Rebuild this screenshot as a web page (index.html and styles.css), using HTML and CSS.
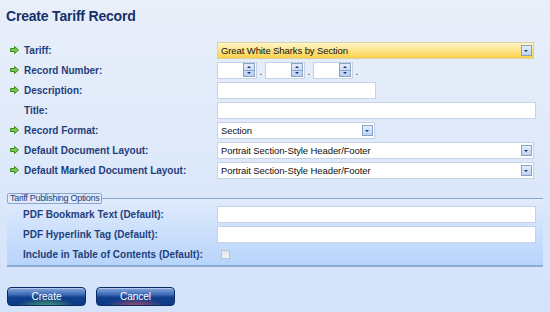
FILE: index.html
```html
<!DOCTYPE html>
<html lang="en">
<head>
  <meta charset="UTF-8">
  <title>Create Tariff Record</title>
  <link rel="stylesheet" href="styles.css">
</head>
<body>
  <h1 class="page-title">Create Tariff Record</h1>

  <div class="form-rows">
    <div class="row">
      <label class="req">
        <svg class="arrow" width="9" height="8" viewBox="0 0 9 8"><path d="M0.5 2.5h4v-2l4 3.5-4 3.5v-2h-4z" fill="#7cc84a" stroke="#3d8a22" stroke-width="1"/></svg>
        Tariff:
      </label>
      <div class="select select-wide select-hl">
        <span>Great White Sharks by Section</span>
        <span class="drop-btn"></span>
      </div>
    </div>

    <div class="row">
      <label class="req">
        <svg class="arrow" width="9" height="8" viewBox="0 0 9 8"><path d="M0.5 2.5h4v-2l4 3.5-4 3.5v-2h-4z" fill="#7cc84a" stroke="#3d8a22" stroke-width="1"/></svg>
        Record Number:
      </label>
      <div class="spinners">
        <div class="spin"><span class="spin-btn"><i class="up"></i><i class="down"></i></span></div>
        <span class="dot">.</span>
        <div class="spin"><span class="spin-btn"><i class="up"></i><i class="down"></i></span></div>
        <span class="dot">.</span>
        <div class="spin"><span class="spin-btn"><i class="up"></i><i class="down"></i></span></div>
        <span class="dot">.</span>
      </div>
    </div>

    <div class="row">
      <label class="req">
        <svg class="arrow" width="9" height="8" viewBox="0 0 9 8"><path d="M0.5 2.5h4v-2l4 3.5-4 3.5v-2h-4z" fill="#7cc84a" stroke="#3d8a22" stroke-width="1"/></svg>
        Description:
      </label>
      <div class="text-input short"></div>
    </div>

    <div class="row">
      <label class="plain">Title:</label>
      <div class="text-input long"></div>
    </div>

    <div class="row">
      <label class="req">
        <svg class="arrow" width="9" height="8" viewBox="0 0 9 8"><path d="M0.5 2.5h4v-2l4 3.5-4 3.5v-2h-4z" fill="#7cc84a" stroke="#3d8a22" stroke-width="1"/></svg>
        Record Format:
      </label>
      <div class="select select-short">
        <span>Section</span>
        <span class="drop-btn"></span>
      </div>
    </div>

    <div class="row">
      <label class="req">
        <svg class="arrow" width="9" height="8" viewBox="0 0 9 8"><path d="M0.5 2.5h4v-2l4 3.5-4 3.5v-2h-4z" fill="#7cc84a" stroke="#3d8a22" stroke-width="1"/></svg>
        Default Document Layout:
      </label>
      <div class="select select-wide">
        <span>Portrait Section-Style Header/Footer</span>
        <span class="drop-btn"></span>
      </div>
    </div>

    <div class="row">
      <label class="req">
        <svg class="arrow" width="9" height="8" viewBox="0 0 9 8"><path d="M0.5 2.5h4v-2l4 3.5-4 3.5v-2h-4z" fill="#7cc84a" stroke="#3d8a22" stroke-width="1"/></svg>
        Default Marked Document Layout:
      </label>
      <div class="select select-wide">
        <span>Portrait Section-Style Header/Footer</span>
        <span class="drop-btn"></span>
      </div>
    </div>
  </div>

  <div class="group">
    <div class="group-head">
      <span class="legend">Tariff Publishing Options</span>
      <span class="group-line"></span>
    </div>
    <div class="group-body">
      <div class="row">
        <label class="plain">PDF Bookmark Text (Default):</label>
        <div class="text-input long"></div>
      </div>
      <div class="row">
        <label class="plain">PDF Hyperlink Tag (Default):</label>
        <div class="text-input long"></div>
      </div>
      <div class="row">
        <label class="plain">Include in Table of Contents (Default):</label>
        <span class="checkbox"></span>
      </div>
    </div>
  </div>

  <div class="actions">
    <button class="btn btn-create">Create</button>
    <button class="btn btn-cancel">Cancel</button>
  </div>
</body>
</html>
```

FILE: styles.css
```css
body {
  margin: 0;
  height: 312px;
  font-family: "Liberation Sans", Arial, sans-serif;
  background: linear-gradient(#e9eff9, #d3e3fb);
  color: #1d3b78;
  overflow: hidden;
}
.page-title {
  margin: 0;
  padding: 7px 0 0 6px;
  height: 18px;
  line-height: 18px;
  font-size: 14px;
  font-weight: bold;
  letter-spacing: -0.2px;
  color: #15306a;
}
.form-rows {
  margin-top: 15px;
}
.row {
  display: grid;
  grid-template-columns: 217px 1fr;
  align-items: center;
  height: 20px;
}
.row label {
  display: flex;
  align-items: center;
  font-size: 10px;
  font-weight: bold;
  color: #1f3f7c;
}
.req {
  padding-left: 10px;
}
.arrow {
  margin-right: 5px;
}
.plain {
  padding-left: 24px;
}
.select,
.text-input,
.spin {
  box-sizing: border-box;
  height: 17px;
  background: #fff;
  border: 1px solid #c6d3e6;
}
.select {
  display: flex;
  align-items: center;
  justify-content: space-between;
  padding: 0 1px 0 3px;
  font-size: 9.5px;
  letter-spacing: -0.1px;
  color: #111;
}
.select-wide {
  width: 317px;
}
.select-short {
  width: 158px;
}
.select-hl {
  background: linear-gradient(#fff6c8, #fde68f 45%, #fbd04a);
  border-color: #d8d2a8;
}
.drop-btn {
  position: relative;
  box-sizing: border-box;
  width: 11px;
  height: 11px;
  border: 1px solid #87a2cb;
  background: linear-gradient(#e6eefb, #bcd1f1);
}
.drop-btn::after {
  content: "";
  position: absolute;
  left: 2px;
  top: 4px;
  border-left: 2.5px solid transparent;
  border-right: 2.5px solid transparent;
  border-top: 2px solid #1d3566;
}
.text-input.short {
  width: 159px;
}
.text-input.long {
  width: 319px;
}
.spinners {
  display: flex;
  align-items: center;
}
.spin {
  width: 40px;
  display: flex;
  justify-content: flex-end;
  align-items: center;
  padding-right: 1px;
}
.spin-btn {
  display: flex;
  flex-direction: column;
  box-sizing: border-box;
  width: 12px;
  height: 14px;
  border: 1px solid #87a2cb;
  background: linear-gradient(#e3ecfb, #b9cff1);
}
.spin-btn i {
  flex: 1;
  display: flex;
  align-items: center;
  justify-content: center;
}
.spin-btn i.up {
  border-bottom: 1px solid #87a2cb;
}
.spin-btn i::after {
  content: "";
  border-left: 2.5px solid transparent;
  border-right: 2.5px solid transparent;
}
.spin-btn i.up::after {
  border-bottom: 2px solid #1d3566;
}
.spin-btn i.down::after {
  border-top: 2px solid #1d3566;
}
.dot {
  width: 8px;
  text-align: center;
  font-size: 10px;
  color: #333;
  align-self: flex-end;
  line-height: 14px;
}
.group {
  margin: 12px 7px 0 7px;
  width: 536px;
}
.group-head {
  display: flex;
  align-items: center;
  height: 12px;
}
.legend {
  box-sizing: border-box;
  height: 11px;
  line-height: 9px;
  padding: 0 2px;
  border: 1px solid #8ba5cc;
  border-radius: 2px;
  font-size: 9px;
  letter-spacing: -0.3px;
  color: #1f3f7c;
  white-space: nowrap;
}
.group-line {
  flex: 1;
  height: 1px;
  background: #8ba5cc;
}
.group-body {
  margin-top: -6px;
  padding: 6px 0 1px 0;
  background: linear-gradient(#e1ebfc, #b7d4fb);
  border-bottom: 2px solid #8eabd4;
}
.group-body .row {
  grid-template-columns: 210px 1fr;
}
.group-body .plain {
  padding-left: 16px;
}
.checkbox {
  box-sizing: border-box;
  margin-left: 4px;
  width: 9px;
  height: 9px;
  border: 1px solid #b7c2d2;
  background: linear-gradient(#dfe4ea, #f2f4f7);
}
.actions {
  display: flex;
  gap: 10px;
  margin: 20px 0 0 7px;
}
.btn {
  width: 79px;
  height: 19px;
  padding: 0;
  border: 1px solid #0b2c63;
  border-radius: 4px;
  font-family: "Liberation Sans", Arial, sans-serif;
  font-size: 10px;
  color: #fff;
  box-shadow: inset 0 1px 0 rgba(255, 255, 255, 0.4);
}
.btn-create {
  background: radial-gradient(ellipse 40% 50% at 50% 110%, #4ea86a, transparent),
    linear-gradient(#86a8dc, #3a68b4 40%, #123f8c 55%, #0d3a86);
}
.btn-cancel {
  background: radial-gradient(ellipse 40% 50% at 50% 110%, #b0506a, transparent),
    linear-gradient(#86a8dc, #3a68b4 40%, #123f8c 55%, #0d3a86);
}
```
